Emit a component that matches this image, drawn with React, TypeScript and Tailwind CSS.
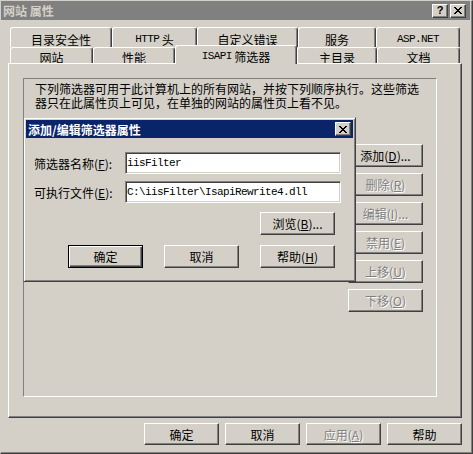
import type { ReactNode } from "react";

const FONT = "font-['Noto_Sans_CJK_SC',sans-serif] text-[12px] leading-[13px]";
const MONO = "font-['Liberation_Mono','Noto_Sans_CJK_SC',monospace] text-[11px] tracking-[-0.6px]";
const RAISED =
   "border border-t-white border-l-white border-r-[#404040] border-b-[#404040] shadow-[inset_-1px_-1px_0_#808080]";
const DISABLED = "text-[#808080] [text-shadow:1px_1px_0_#fff]";

function CloseGlyph() {
   // classic 8x7 pixel X
   const px: [number, number, number][] = [
      [0, 0, 2], [6, 0, 2],
      [1, 1, 2], [5, 1, 2],
      [2, 2, 4],
      [3, 3, 2],
      [2, 4, 4],
      [1, 5, 2], [5, 5, 2],
      [0, 6, 2], [6, 6, 2],
   ];
   return (
      <svg width="8" height="7" viewBox="0 0 8 7" shapeRendering="crispEdges">
         {px.map(([x, y, w]) => (
            <rect key={`${x}-${y}`} x={x} y={y} width={w} height={1} fill="#000" />
         ))}
      </svg>
   );
}

function CaptionButton({ children }: { children: ReactNode }) {
   return (
      <div className={`flex justify-center items-center bg-[#d4d0c8] w-[16px] h-[14px] ${RAISED}`}>
         {children}
      </div>
   );
}

function Btn({
   children,
   className,
   def,
   disabled,
}: {
   children: ReactNode;
   className: string;
   def?: boolean;
   disabled?: boolean;
}) {
   const edge = def
      ? "border border-black shadow-[inset_1px_1px_0_#fff,inset_-1px_-1px_0_#404040,inset_-2px_-2px_0_#808080]"
      : RAISED;
   return (
      <div
         className={`flex justify-center items-center bg-[#d4d0c8] whitespace-nowrap ${edge} ${
            disabled ? DISABLED : "text-black"
         } ${className}`}
      >
         {children}
      </div>
   );
}

function Tab({
   children,
   className,
   selected,
}: {
   children: ReactNode;
   className: string;
   selected?: boolean;
}) {
   return (
      <div
         className={`flex justify-center bg-[#d4d0c8] border-t border-l border-r border-t-white border-l-white border-r-[#404040] shadow-[inset_-1px_0_0_#808080] rounded-t-[3px] whitespace-nowrap ${
            selected ? "relative z-10 -mt-[2px] h-[19px] pt-[4px]" : ""
         } ${className}`}
      >
         {children}
      </div>
   );
}

function Field({ label, keyChar, value }: { label: string; keyChar: string; value: string }) {
   return (
      <div className="flex items-center">
         <div className="w-[91px] whitespace-nowrap">
            {label}(<u>{keyChar}</u>):
         </div>
         <div className="flex items-center bg-white pl-[1px] border border-t-[#808080] border-l-[#808080] border-r-white border-b-white w-[216px] h-[22px] shadow-[inset_1px_1px_0_#404040,inset_-1px_-1px_0_#d4d0c8]">
            <span className={`${MONO} text-black`}>{value}</span>
         </div>
      </div>
   );
}

export default function App() {
   const sideButtons: { label: string; key: string; tail?: string; disabled?: boolean }[] = [
      { label: "添加", key: "D", tail: "..." },
      { label: "删除", key: "R", disabled: true },
      { label: "编辑", key: "I", tail: "...", disabled: true },
      { label: "禁用", key: "E", disabled: true },
      { label: "上移", key: "U", disabled: true },
      { label: "下移", key: "O", disabled: true },
   ];

   return (
      <div
         className={`relative flex flex-col bg-[#d4d0c8] border-t border-l border-t-[#d4d0c8] border-l-[#d4d0c8] border-r border-b border-r-[#404040] border-b-[#404040] shadow-[inset_-1px_-1px_0_#808080] w-[473px] h-[454px] overflow-hidden text-black ${FONT}`}
      >
         {/* title bar */}
         <div className="flex justify-between items-center bg-[#808080] mr-[2px] pr-[4px] pl-[2px] h-[19px]">
            <span className="font-bold text-[#d4d0c8]">网站 属性</span>
            <div className="flex gap-[2px]">
               <CaptionButton>
                  <span className="font-['Liberation_Sans',sans-serif] font-bold text-[11px] leading-none">?</span>
               </CaptionButton>
               <CaptionButton>
                  <CloseGlyph />
               </CaptionButton>
            </div>
         </div>

         {/* tabs */}
         <div className="flex flex-col mt-[7px] ml-[9px]">
            <div className="flex h-[20px]">
               <Tab className="pt-[5px] w-[102px]">目录安全性</Tab>
               <Tab className="pt-[5px] w-[85px]">
                  <span className={MONO}>HTTP</span>&nbsp;头
               </Tab>
               <Tab className="pt-[5px] w-[101px]">自定义错误</Tab>
               <Tab className="pt-[5px] w-[78px]">服务</Tab>
               <Tab className="pt-[5px] w-[84px]">
                  <span className={MONO}>ASP.NET</span>
               </Tab>
            </div>
            <div className="flex items-start h-[16px]">
               <Tab className="pt-[3px] w-[83px] h-[16px]">网站</Tab>
               <Tab className="pt-[3px] w-[82px] h-[16px]">性能</Tab>
               <Tab selected className="w-[122px]">
                  <span className={MONO}>ISAPI</span>&nbsp;筛选器
               </Tab>
               <Tab className="pt-[3px] w-[80px] h-[16px]">主目录</Tab>
               <Tab className="pt-[3px] w-[83px] h-[16px]">文档</Tab>
            </div>
         </div>

         {/* tab panel */}
         <div className="bg-[#d4d0c8] ml-[7px] border-t border-l border-t-white border-l-white border-r border-b border-r-[#404040] border-b-[#404040] w-[454px] h-[355px] shadow-[inset_-1px_-1px_0_#808080]">
            <div className="flex flex-col mt-[14px] ml-[14px] border-t border-l border-t-[#808080] border-l-[#808080] border-r border-b border-r-white border-b-white w-[414px] h-[319px]">
               <div className="pt-[3px] pl-[11px] leading-[14px] whitespace-nowrap">
                  <div>下列筛选器可用于此计算机上的所有网站，并按下列顺序执行。这些筛选</div>
                  <div>器只在此属性页上可见，在单独的网站的属性页上看不见。</div>
               </div>
               <div className="flex justify-end mt-[34px] pr-[13px]">
                  <div className="flex flex-col gap-[6px]">
                     {sideButtons.map((b) => (
                        <Btn key={b.label} disabled={b.disabled} className="w-[75px] h-[23px]">
                           {b.label}(<u>{b.key}</u>){b.tail}
                        </Btn>
                     ))}
                  </div>
               </div>
            </div>
         </div>

         {/* bottom buttons */}
         <div className="flex gap-[6px] mt-[5px] ml-[143px]">
            <Btn className="w-[75px] h-[22px]">确定</Btn>
            <Btn className="w-[75px] h-[22px]">取消</Btn>
            <Btn disabled className="w-[75px] h-[22px]">
               应用(<u>A</u>)
            </Btn>
            <Btn className="w-[75px] h-[22px]">帮助</Btn>
         </div>

         {/* modal dialog */}
         <div className="top-[116px] left-[22px] z-20 absolute flex flex-col bg-[#d4d0c8] bg-clip-padding p-[2px] border-t border-l border-t-transparent border-l-transparent border-r border-b border-r-[#404040] border-b-[#404040] w-[333px] h-[165px] shadow-[inset_1px_1px_0_#fff,inset_-1px_-1px_0_#808080]">
            <div className="flex justify-between items-center bg-[#0a246a] pr-[2px] pl-[2px] h-[18px]">
               <span className="font-bold text-white">添加/编辑筛选器属性</span>
               <CaptionButton>
                  <CloseGlyph />
               </CaptionButton>
            </div>
            <div className="flex flex-col ml-[8px]">
               <div className="mt-[14px]">
                  <Field label="筛选器名称" keyChar="F" value="iisFilter" />
               </div>
               <div className="mt-[7px]">
                  <Field label="可执行文件" keyChar="E" value="C:\iisFilter\IsapiRewrite4.dll" />
               </div>
               <div className="mt-[9px] ml-[226px]">
                  <Btn className="w-[75px] h-[23px]">
                     浏览(<u>B</u>)...
                  </Btn>
               </div>
               <div className="flex gap-[21px] mt-[10px] ml-[34px]">
                  <Btn def className="w-[75px] h-[23px]">确定</Btn>
                  <Btn className="w-[75px] h-[23px]">取消</Btn>
                  <Btn className="w-[75px] h-[23px]">
                     帮助(<u>H</u>)
                  </Btn>
               </div>
            </div>
         </div>
      </div>
   );
}
